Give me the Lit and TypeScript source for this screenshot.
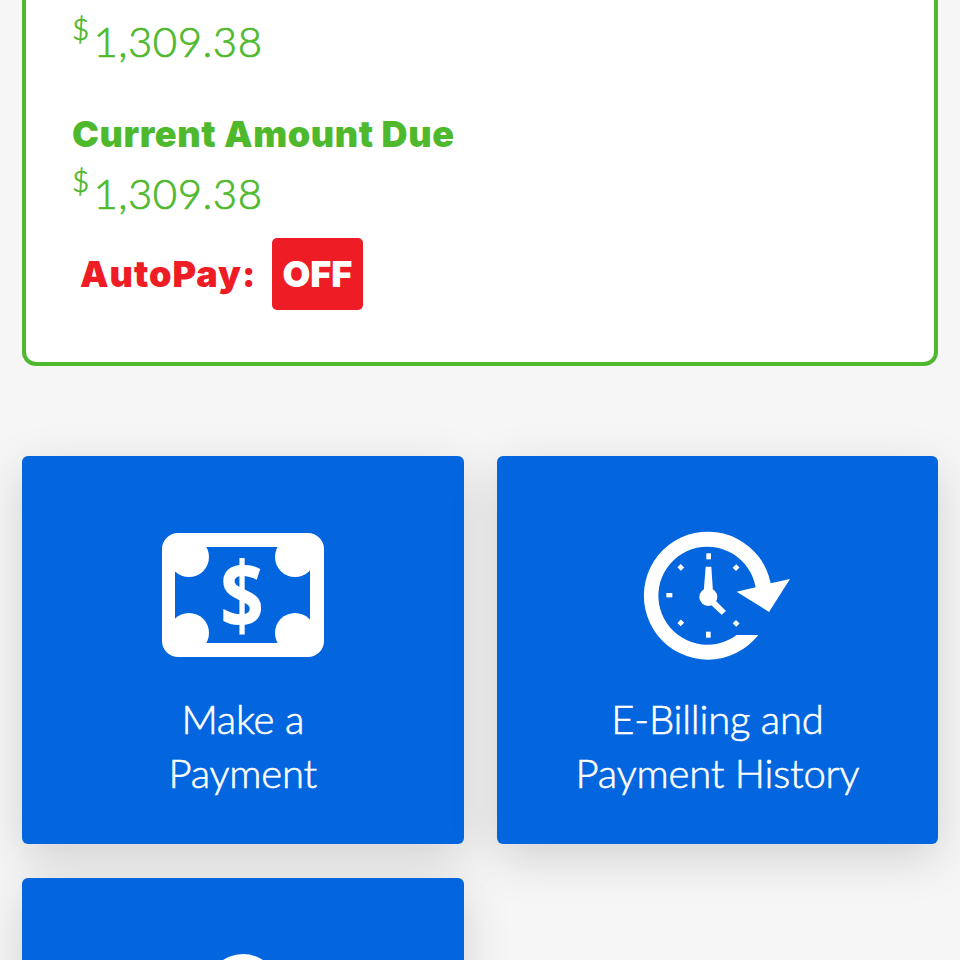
import { LitElement, html, css, svg } from "lit";
import { customElement } from "lit/decorators.js";

const money = svg`<svg class="ic" viewBox="3 0 200 170" width="200" height="170">
<path fill="#fff" fill-rule="evenodd" d="M38 23H168a16 16 0 0 1 16 16V131a16 16 0 0 1 -16 16H38a16 16 0 0 1 -16 -16V39a16 16 0 0 1 16 -16ZM35 37V133H170V37Z"/>
<circle cx="49" cy="47" r="20" fill="#fff"/><circle cx="155" cy="47" r="20" fill="#fff"/>
<circle cx="49" cy="123" r="20" fill="#fff"/><circle cx="155" cy="123" r="20" fill="#fff"/>
<text class="dl" transform="translate(102 119) scale(1 1.2)" text-anchor="middle">$</text></svg>`;

const clock = svg`<svg class="ic" viewBox="9 0 570 510" width="190" height="170">
<path fill="#fff" d="M452 220A192 192 0 1 0 415 375H350A147 147 0 1 1 407 232L350 245L447 306L510 207Z"/>
<circle cx="265" cy="261" r="27" fill="#fff"/>
<path fill="#fff" d="M257 170H274L279 245H251ZM285 270L318 303L305 314L270 282Z"/>
<g fill="#fff"><rect x="259" y="130" width="14" height="18"/><rect x="258" y="365" width="14" height="18"/><rect x="139" y="249" width="18" height="13"/>
<rect x="175" y="165" width="15" height="14" transform="rotate(45 182 172)"/><rect x="341" y="166" width="15" height="14" transform="rotate(-45 348 173)"/>
<rect x="175" y="332" width="15" height="14" transform="rotate(-45 182 339)"/><rect x="341" y="333" width="15" height="14" transform="rotate(45 348 340)"/></g></svg>`;

const partial = svg`<svg class="ic" viewBox="3 0 200 170" width="200" height="170"><circle cx="103" cy="58" r="36" fill="#fff"/></svg>`;

@customElement("app-root")
export class AppRoot extends LitElement {
  static styles = css`
    :host { display: block; height: 960px; overflow: hidden; background: #f6f6f6; font-family: "Lato", "Liberation Sans", sans-serif; }
    .card { margin: 0 22px; height: 366px; box-sizing: border-box; background: #fff; border: 4px solid #4fb92d; border-top: 0; border-radius: 0 0 14px 14px; padding: 0 0 0 46px; }
    .amount { display: flex; color: #4fb92d; font-weight: 300; font-size: 42px; line-height: 52px; letter-spacing: .5px; height: 52px; -webkit-text-stroke: .7px #4fb92d; }
    .amount sup { font-size: 30px; line-height: 26px; margin-right: 4px; letter-spacing: 0; }
    .first { padding-top: 15px; }
    .label { color: #4fb92d; font-family: "Inter", sans-serif; font-weight: 900; font-size: 36px; letter-spacing: .6px; line-height: 44px; margin-top: 45px; white-space: nowrap; }
    .second { margin-top: 11px; }
    .auto { display: flex; align-items: center; gap: 15.5px; margin: 19px 0 0 8px; color: #ee1c25; font-family: "Inter", sans-serif; font-weight: 900; font-size: 36px; letter-spacing: 1px; }
    .off { width: 91px; height: 72px; border-radius: 5px; background: #ee1c25; color: #fff; display: flex; align-items: center; justify-content: center; letter-spacing: 0; }
    .grid { display: grid; grid-template-columns: 441.5px 441px; column-gap: 33.5px; row-gap: 34px; margin: 90px 22px 0; }
    .tile { height: 388px; box-sizing: border-box; border-radius: 6px; background: #0366df; box-shadow: 0 14px 48px rgba(0,0,0,.15); color: #fff; display: flex; flex-direction: column; align-items: center; padding-top: 54px; }
    .ic { display: block; flex: none; }
    .dl { font: 700 77px "Open Sans", sans-serif; fill: #fff; }
    .t { font-size: 40px; font-weight: 300; line-height: 54px; text-align: center; margin-top: 12px; letter-spacing: -.2px; -webkit-text-stroke: .6px #fff; }
  `;
  render() {
    return html`
      <div class="card">
        <div class="amount first"><sup>$</sup>1,309.38</div>
        <div class="label">Current Amount Due</div>
        <div class="amount second"><sup>$</sup>1,309.38</div>
        <div class="auto"><span>AutoPay:</span><span class="off">OFF</span></div>
      </div>
      <div class="grid">
        <div class="tile">${money}<div class="t">Make a<br />Payment</div></div>
        <div class="tile">${clock}<div class="t">E-Billing and<br />Payment History</div></div>
        <div class="tile">${partial}</div>
      </div>`;
  }
}
